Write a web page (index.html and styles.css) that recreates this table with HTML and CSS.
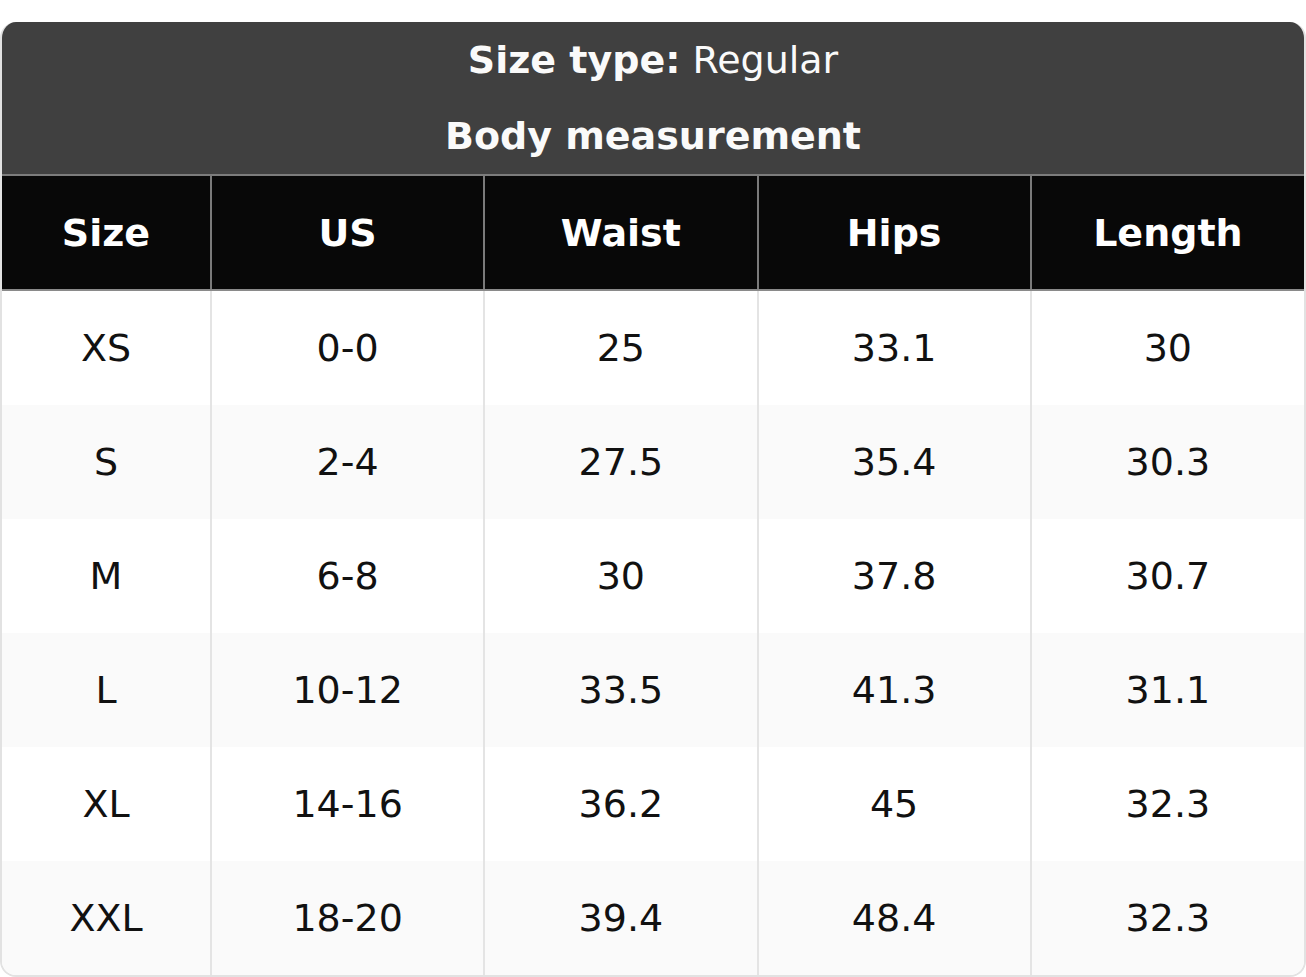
FILE: index.html
```html
<!DOCTYPE html>
<html lang="en">
<head>
<meta charset="utf-8">
<title>Size chart</title>
<link rel="stylesheet" href="styles.css">
</head>
<body>
<div class="chart">
  <div class="title">
    <div class="title-line first"><b>Size type:</b> Regular</div>
    <div class="title-line"><b>Body measurement</b></div>
  </div>
  <table class="grid">
    <colgroup>
      <col class="c-size"><col><col><col><col>
    </colgroup>
    <thead>
      <tr><th>Size</th><th>US</th><th>Waist</th><th>Hips</th><th>Length</th></tr>
    </thead>
    <tbody>
      <tr><td>XS</td><td>0-0</td><td>25</td><td>33.1</td><td>30</td></tr>
      <tr><td>S</td><td>2-4</td><td>27.5</td><td>35.4</td><td>30.3</td></tr>
      <tr><td>M</td><td>6-8</td><td>30</td><td>37.8</td><td>30.7</td></tr>
      <tr><td>L</td><td>10-12</td><td>33.5</td><td>41.3</td><td>31.1</td></tr>
      <tr><td>XL</td><td>14-16</td><td>36.2</td><td>45</td><td>32.3</td></tr>
      <tr><td>XXL</td><td>18-20</td><td>39.4</td><td>48.4</td><td>32.3</td></tr>
    </tbody>
  </table>
</div>
</body>
</html>
```
FILE: styles.css
```css
html, body {
  margin: 0;
  padding: 0;
  background: #ffffff;
}
body {
  padding-top: 22px;
  font-family: "DejaVu Sans", "Liberation Sans", sans-serif;
}
.chart {
  width: 1306px;
  box-sizing: border-box;
  border: 2px solid #e2e2e2;
  border-top: none;
  border-radius: 16px;
  overflow: hidden;
  height: 955px;
}
.title {
  background: #404040;
  color: #fafafa;
  border-bottom: 2px solid #7c7c7c;
}
.title-line {
  height: 76px;
  line-height: 76px;
  text-align: center;
  font-size: 38px;
  font-weight: normal;
}
.title-line.first {
  height: 76px;
  line-height: 76px;
}
.title-line b {
  font-weight: bold;
}
.grid {
  width: 100%;
  border-collapse: collapse;
  table-layout: fixed;
}
.c-size {
  width: 209px;
}
.grid th {
  background: #080808;
  color: #ffffff;
  font-size: 38px;
  font-weight: bold;
  height: 113px;
  padding: 0;
  border-left: 2px solid #7a7a7a;
  border-bottom: 2px solid #8a8a8a;
}
.grid td {
  height: 114px;
  padding: 0;
  text-align: center;
  font-size: 38px;
  color: #111111;
  border-left: 2px solid #e4e4e4;
}
.grid th:first-child,
.grid td:first-child {
  border-left: none;
}
.grid tbody tr:nth-child(even) td {
  background: #fafafa;
}
```
